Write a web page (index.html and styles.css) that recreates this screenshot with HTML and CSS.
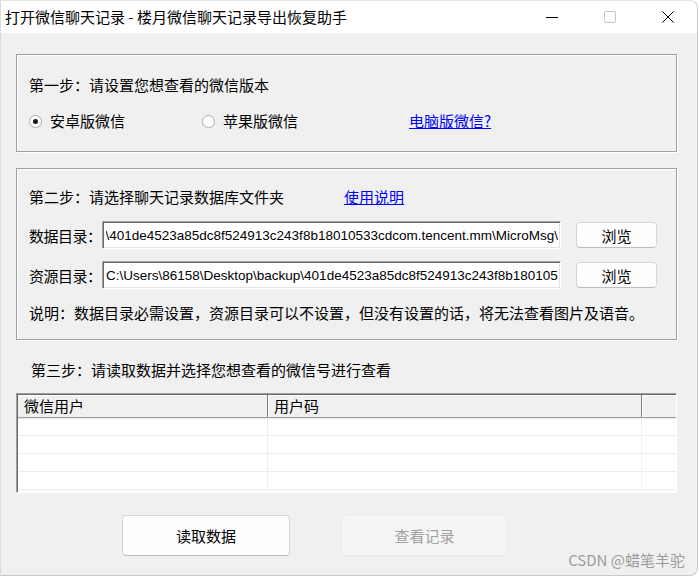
FILE: index.html
```html
<!DOCTYPE html>
<html lang="zh-CN">
<head>
  <meta charset="UTF-8" />
  <title>打开微信聊天记录 - 楼月微信聊天记录导出恢复助手</title>
  <link rel="stylesheet" href="styles.css">
</head>
<body>
  <div class="window">
    <!-- title bar -->
    <div class="titlebar">
      <div class="title">打开微信聊天记录 - 楼月微信聊天记录导出恢复助手</div>
      <div class="ctrl">
        <svg width="14" height="14" viewBox="0 0 14 14"><path d="M1 7.5h12" stroke="#000" stroke-width="1"/></svg>
      </div>
      <div class="ctrl">
        <svg width="14" height="14" viewBox="0 0 14 14"><rect x="1.5" y="1.5" width="11" height="11" rx="1.5" fill="none" stroke="#c4c4c4"/></svg>
      </div>
      <div class="ctrl">
        <svg width="14" height="14" viewBox="0 0 14 14"><path d="M1.5 1.5l11 11M12.5 1.5l-11 11" stroke="#000" stroke-width="1"/></svg>
      </div>
    </div>

    <div class="client">
      <!-- step 1 -->
      <div class="group group-one">
        <div class="step-title">第一步：请设置您想查看的微信版本</div>
        <div class="radio-row">
          <label class="opt opt-first"><span class="radio checked"></span>安卓版微信</label>
          <label class="opt opt-second"><span class="radio"></span>苹果版微信</label>
          <a href="#" class="link">电脑版微信?</a>
        </div>
      </div>

      <!-- step 2 -->
      <div class="group group-two">
        <div class="step-head">
          <div class="step-title wide">第二步：请选择聊天记录数据库文件夹</div>
          <a href="#" class="link">使用说明</a>
        </div>
        <div class="path-row">
          <span class="path-label">数据目录：</span>
          <div class="path-box tail"><span class="path-text"><span class="ltr">\401de4523a85dc8f524913c243f8b18010533cdcom.tencent.mm\MicroMsg\</span></span></div>
          <button class="btn browse">浏览</button>
        </div>
        <div class="path-row second">
          <span class="path-label">资源目录：</span>
          <div class="path-box"><span class="path-text">C:\Users\86158\Desktop\backup\401de4523a85dc8f524913c243f8b180105</span></div>
          <button class="btn browse">浏览</button>
        </div>
        <div class="note">说明：数据目录必需设置，资源目录可以不设置，但没有设置的话，将无法查看图片及语音。</div>
      </div>

      <!-- step 3 -->
      <div class="step-three">第三步：请读取数据并选择您想查看的微信号进行查看</div>
      <div class="list">
        <div class="list-head">
          <div class="col c1">微信用户</div>
          <div class="col c2">用户码</div>
          <div class="col c3"></div>
        </div>
        <div class="list-row"><div class="cell c1"></div><div class="cell c2"></div><div class="cell c3"></div></div>
        <div class="list-row"><div class="cell c1"></div><div class="cell c2"></div><div class="cell c3"></div></div>
        <div class="list-row"><div class="cell c1"></div><div class="cell c2"></div><div class="cell c3"></div></div>
        <div class="list-row"><div class="cell c1"></div><div class="cell c2"></div><div class="cell c3"></div></div>
      </div>

      <div class="actions">
        <button class="btn big">读取数据</button>
        <button class="btn big disabled">查看记录</button>
      </div>
    </div>

    <div class="watermark">CSDN @蜡笔羊驼</div>
  </div>
</body>
</html>
```

FILE: styles.css
```css
* {
  margin: 0;
  padding: 0;
  box-sizing: border-box;
}

body {
  width: 699px;
  height: 576px;
  overflow: hidden;
  background: #fff;
  font-family: "Noto Sans CJK SC", "Liberation Sans", sans-serif;
  font-size: 15px;
  color: #000;
}

.window {
  position: relative;
  width: 698px;
  height: 576px;
  background: #f0f0f0;
  border: 1px solid #c8c8c8;
  border-left: 1px solid #dcdcdc;
  border-top-color: #e4e4e4;
  border-radius: 0 8px 8px 0;
  overflow: hidden;
  display: flex;
  flex-direction: column;
}

.titlebar {
  height: 32px;
  background: #fff;
  display: flex;
  align-items: center;
  flex-shrink: 0;
}

.title {
  flex: 1;
  padding-left: 4px;
  line-height: 20px;
  font-size: 15px;
  white-space: nowrap;
}

.ctrl {
  width: 58px;
  height: 32px;
  display: flex;
  align-items: center;
  justify-content: center;
}

.ctrl svg {
  display: block;
}

.client {
  flex: 1;
  padding: 21px 20px 0 15px;
}

.group {
  border: 1px solid #a0a0a0;
  box-shadow: inset 1px 1px #fff, 1px 1px #fff;
}

.group-one {
  height: 98px;
  padding: 20px 12px 0;
}

.step-title {
  line-height: 20px;
  white-space: nowrap;
}

.radio-row {
  margin-top: 16px;
  display: flex;
  align-items: center;
  line-height: 20px;
}

.opt {
  display: flex;
  align-items: center;
  gap: 8px;
}

.opt-first {
  width: 173px;
}

.opt-second {
  width: 207px;
}

.radio {
  position: relative;
  width: 13px;
  height: 13px;
  border-radius: 50%;
  border: 1px solid #b0b0b0;
  background: #fff;
  box-shadow: 0 0 1px #d8d8d8;
}

.radio.checked::after {
  content: "";
  position: absolute;
  left: 3px;
  top: 3px;
  width: 5px;
  height: 5px;
  border-radius: 50%;
  background: #1a1a1a;
}

.link {
  color: #0000ff;
  text-decoration: underline;
  line-height: 20px;
}

.group-two {
  margin-top: 16px;
  height: 172px;
  padding: 18px 19px 0 12px;
}

.step-head {
  display: flex;
  align-items: center;
}

.step-title.wide {
  width: 315px;
}

.path-row {
  margin-top: 14px;
  display: flex;
  align-items: center;
}

.path-row.second {
  margin-top: 12px;
}

.path-label {
  width: 73px;
  letter-spacing: -0.5px;
  white-space: nowrap;
}

.path-box {
  width: 459px;
  height: 28px;
  background: #fff;
  border-top: 1px solid #a0a0a0;
  border-left: 1px solid #a0a0a0;
  border-right: 1px solid #fff;
  border-bottom: 1px solid #fff;
  box-shadow: inset 1px 1px #696969, inset -1px -1px #e3e3e3;
  display: flex;
  align-items: center;
  padding: 0 2px 0 3px;
  overflow: hidden;
  font-family: "Liberation Sans", sans-serif;
  font-size: 13.5px;
}

.path-text {
  display: block;
  width: 100%;
  overflow: hidden;
  white-space: nowrap;
}

/* first box is scrolled to the end of the path */
.path-box.tail .path-text {
  direction: rtl;
}

.ltr {
  direction: ltr;
  unicode-bidi: isolate;
}

.btn {
  font-family: "Noto Sans CJK SC", "Liberation Sans", sans-serif;
  font-size: 15px;
  color: #000;
  background: #fdfdfd;
  border: 1px solid #d6d6d6;
  border-bottom-color: #bdbdbd;
  border-radius: 4px;
}

.browse {
  margin-left: 15px;
  width: 81px;
  height: 26px;
}

.note {
  margin-top: 14px;
  line-height: 20px;
  white-space: nowrap;
}

.step-three {
  margin-top: 20px;
  padding-left: 15px;
  line-height: 20px;
}

.list {
  margin-top: 13px;
  height: 100px;
  background: #fff;
  border-top: 1px solid #a0a0a0;
  border-left: 1px solid #a0a0a0;
  border-right: 1px solid #fff;
  border-bottom: 1px solid #fff;
  box-shadow: inset 1px 1px #696969;
  padding: 1px 0 0 1px;
  overflow: hidden;
}

.list-head {
  display: flex;
  height: 23px;
  background: #f0f0f0;
  border-bottom: 1px solid #a0a0a0;
  box-shadow: inset 0 1px #fff, 0 1px #e8e8e8;
}

.col {
  line-height: 22px;
  padding-left: 6px;
  border-right: 1px solid #808080;
  box-shadow: 1px 0 #fff;
  white-space: nowrap;
}

.c1 {
  width: 250px;
}

.c2 {
  width: 374px;
}

.c3 {
  flex: 1;
  border-right: none;
  box-shadow: none;
}

.list-row {
  display: flex;
  height: 18px;
  border-bottom: 1px solid #ececec;
}

.list-row:first-of-type {
  margin-top: 1px;
}

.cell {
  border-right: 1px solid #f0f0f0;
}

.cell.c3 {
  border-right: none;
}

.actions {
  margin-top: 22px;
  padding-left: 106px;
  display: flex;
  gap: 51px;
}

.big {
  width: 168px;
  height: 41px;
}

.big.disabled {
  width: 167px;
  color: #a0a0a0;
  background: #f5f5f5;
  border-color: #ebebeb;
}

.watermark {
  position: absolute;
  right: 12px;
  bottom: 5px;
  font-size: 15px;
  color: rgba(140, 140, 140, 0.85);
  white-space: nowrap;
}
```
